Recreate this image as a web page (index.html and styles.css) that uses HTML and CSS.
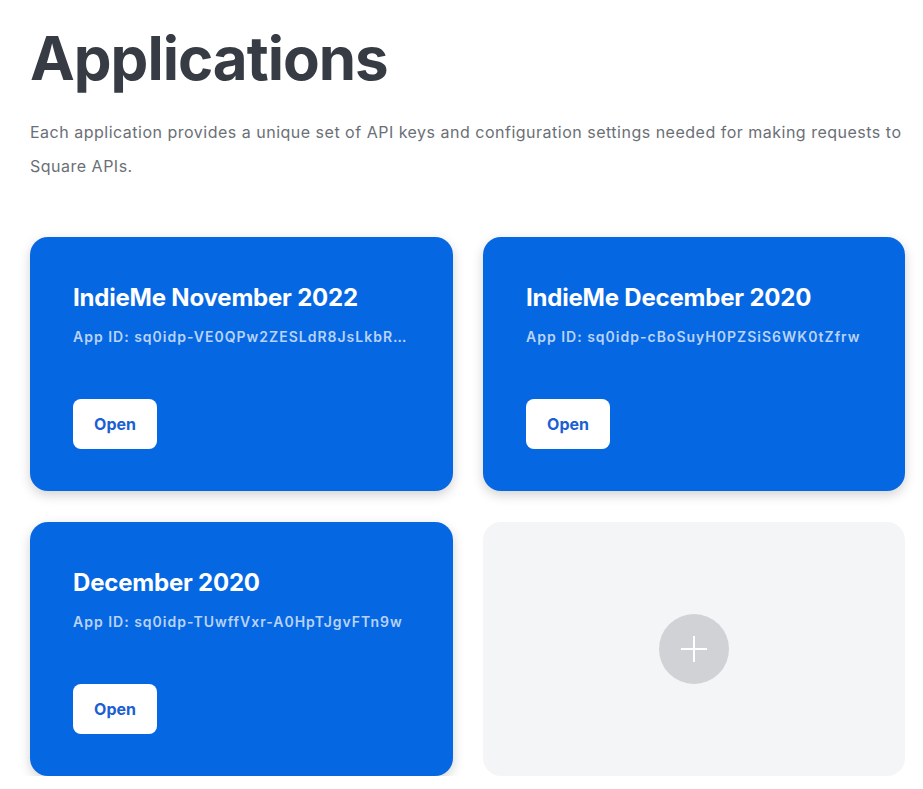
FILE: index.html
```html
<!DOCTYPE html>
<html lang="en">
<head>
  <meta charset="UTF-8" />
  <title>Applications</title>
  <link rel="stylesheet" href="styles.css">
</head>
<body>
  <div class="page">
    <h1 class="title">Applications</h1>
    <p class="intro">Each application provides a unique set of API keys and configuration settings needed for making requests to Square APIs.</p>

    <div class="app-grid">
      <div class="app-card">
        <div class="app-name">IndieMe November 2022</div>
        <div class="app-id">App ID: sq0idp-VE0QPw2ZESLdR8JsLkbRxq7nT4</div>
        <button class="open-btn">Open</button>
      </div>

      <div class="app-card">
        <div class="app-name">IndieMe December 2020</div>
        <div class="app-id">App ID: sq0idp-cBoSuyH0PZSiS6WK0tZfrw</div>
        <button class="open-btn">Open</button>
      </div>

      <div class="app-card">
        <div class="app-name">December 2020</div>
        <div class="app-id">App ID: sq0idp-TUwffVxr-A0HpTJgvFTn9w</div>
        <button class="open-btn">Open</button>
      </div>

      <div class="add-card">
        <div class="add-circle">
          <svg width="28" height="28" viewBox="0 0 28 28">
            <path d="M14 1v26M1 14h26" stroke="#fff" stroke-width="2" fill="none" />
          </svg>
        </div>
      </div>
    </div>
  </div>
</body>
</html>
```

FILE: styles.css
```css
body {
  margin: 0;
  font-family: Inter, "Noto Sans", sans-serif;
  background: #fff;
}

.page {
  width: 875px;
  padding: 0 0 0 30px;
}

.title {
  margin: 22px 0 0;
  font-size: 60px;
  line-height: 72px;
  font-weight: 700;
  color: #373c44;
  letter-spacing: -1px;
}

.intro {
  margin: 21px 0 0;
  font-size: 16px;
  line-height: 34px;
  color: #6b6f76;
  letter-spacing: 0.5px;
}

.app-grid {
  display: grid;
  grid-template-columns: 423px 422px;
  grid-auto-rows: 254px;
  column-gap: 30px;
  row-gap: 31px;
  margin-top: 54px;
}

.app-card {
  display: flex;
  flex-direction: column;
  align-items: flex-start;
  padding: 46px 43px 42px;
  background: #0667e3;
  border-radius: 18px;
  box-shadow: 0 4px 12px rgba(0, 0, 0, 0.18);
}

.app-name {
  font-size: 24px;
  line-height: 30px;
  font-weight: 700;
  color: #fff;
  letter-spacing: -0.2px;
}

.app-id {
  margin-top: 14px;
  max-width: 340px;
  font-size: 14px;
  line-height: 20px;
  font-weight: 600;
  letter-spacing: 1px;
  color: #b9d3f7;
  white-space: nowrap;
  overflow: hidden;
  text-overflow: ellipsis;
}

.open-btn {
  margin-top: auto;
  width: 84px;
  height: 50px;
  border: none;
  border-radius: 8px;
  background: #fff;
  color: #1b5fd3;
  font-family: inherit;
  font-size: 16px;
  font-weight: 700;
  cursor: pointer;
}

.add-card {
  display: flex;
  justify-content: center;
  align-items: center;
  background: #f4f5f7;
  border-radius: 18px;
}

.add-circle {
  display: flex;
  justify-content: center;
  align-items: center;
  width: 70px;
  height: 70px;
  border-radius: 50%;
  background: #d0d2d5;
}
```
